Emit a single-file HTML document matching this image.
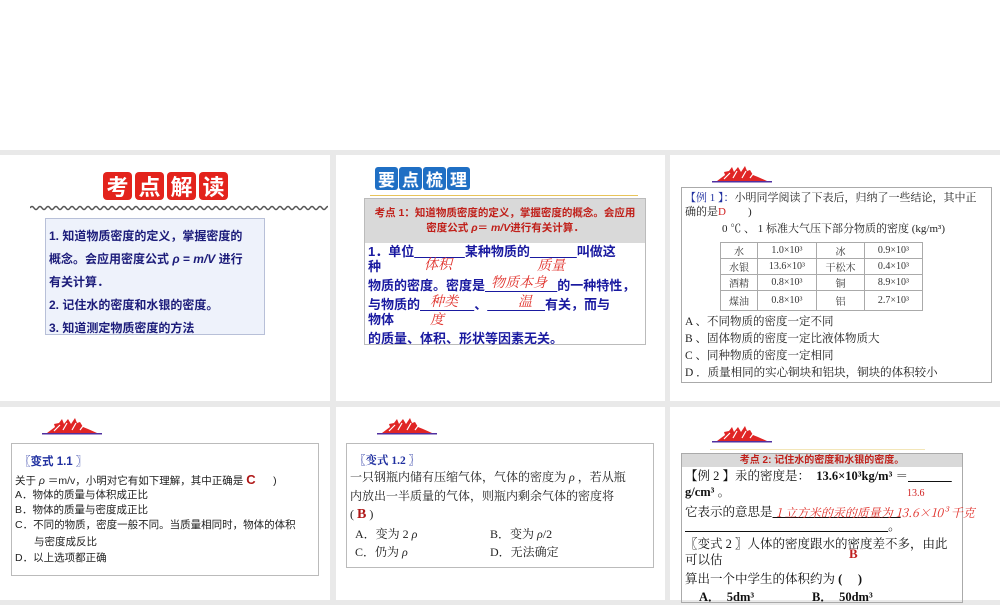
<!DOCTYPE html>
<html><head><meta charset="utf-8"><style>
*{margin:0;padding:0;box-sizing:border-box}
body{width:1000px;height:600px;position:relative;background:#e9e9e9;overflow:hidden;font-family:"Liberation Serif","Noto Serif CJK SC","Noto Sans CJK SC",serif}
.a{position:absolute}
.p{position:absolute;background:#fff}
.s{font-family:"Liberation Sans","Noto Sans CJK SC",sans-serif}
.rb{position:absolute;width:29px;height:28px;background:#e3231c;border-radius:4px;color:#fff;font:bold 22px/28px "Noto Sans CJK SC",sans-serif;text-align:center}
.bb{position:absolute;width:23px;height:23px;background:#1f6fc4;border-radius:3px;color:#fff;font:bold 17px/23px "Noto Sans CJK SC",sans-serif;text-align:center}
.l{position:absolute;white-space:nowrap}
.hw{color:#e0302a;font-family:"Noto Serif CJK SC",serif;font-style:italic;font-size:14px}
table{border-collapse:collapse}
td{border:1px solid #aaa;font-size:10px;text-align:center;color:#333;height:16px}
</style></head><body>
<div class="a" style="left:0;top:0;width:1000px;height:150px;background:#fff"></div>
<div class="p" style="left:0;top:155px;width:330px;height:246px"></div>
<div class="p" style="left:336px;top:155px;width:329px;height:246px"></div>
<div class="p" style="left:670px;top:155px;width:330px;height:246px"></div>
<div class="p" style="left:0;top:407px;width:330px;height:193px"></div>
<div class="p" style="left:336px;top:407px;width:329px;height:193px"></div>
<div class="p" style="left:670px;top:407px;width:330px;height:193px"></div>

<!-- panel1 -->
<div class="rb" style="left:103px;top:172px">考</div>
<div class="rb" style="left:135px;top:172px">点</div>
<div class="rb" style="left:167px;top:172px">解</div>
<div class="rb" style="left:199px;top:172px">读</div>
<svg class="a" style="left:30px;top:205px" width="298" height="6"><path d="M0 3 q2 -3 4 0 t4 0 t4 0 t4 0 t4 0 t4 0 t4 0 t4 0 t4 0 t4 0 t4 0 t4 0 t4 0 t4 0 t4 0 t4 0 t4 0 t4 0 t4 0 t4 0 t4 0 t4 0 t4 0 t4 0 t4 0 t4 0 t4 0 t4 0 t4 0 t4 0 t4 0 t4 0 t4 0 t4 0 t4 0 t4 0 t4 0 t4 0 t4 0 t4 0 t4 0 t4 0 t4 0 t4 0 t4 0 t4 0 t4 0 t4 0 t4 0 t4 0 t4 0 t4 0 t4 0 t4 0 t4 0 t4 0 t4 0 t4 0 t4 0 t4 0 t4 0 t4 0 t4 0 t4 0 t4 0 t4 0 t4 0 t4 0 t4 0 t4 0 t4 0 t4 0 t4 0 t4 0 t4 0 t4 0 t4 0 t4 0" stroke="#555" fill="none" stroke-width="1.5"/></svg>
<div class="a" style="left:45px;top:218px;width:220px;height:117px;background:#eef2fb;border:1px solid #b8c0d8"></div>
<div class="s" style="position:absolute;left:49px;top:225px;color:#1c1c7a;font-size:12px;font-weight:bold;line-height:23px;width:215px">
1. 知道物质密度的定义，掌握密度的<br>概念。会应用密度公式 <i>ρ</i> = <i>m/V</i> 进行<br>有关计算．<br>2. 记住水的密度和水银的密度。<br>3. 知道测定物质密度的方法</div>

<!-- panel2 -->
<div class="bb" style="left:375px;top:167px">要</div>
<div class="bb" style="left:399px;top:167px">点</div>
<div class="bb" style="left:423px;top:167px">梳</div>
<div class="bb" style="left:447px;top:167px">理</div>
<div class="a" style="left:370px;top:195px;width:268px;height:1px;background:#e8c45a"></div>
<div class="a" style="left:364px;top:198px;width:282px;height:147px;border:1px solid #bbb"></div>
<div class="a s" style="left:365px;top:199px;width:280px;height:44px;background:#d9d9d9;color:#c0201a;font-size:10.5px;font-weight:bold;text-align:center;line-height:15px;padding-top:7px">考点 1：知道物质密度的定义，掌握密度的概念。会应用<br>密度公式 <i>ρ</i>＝ <i>m/V</i>进行有关计算．</div>
<div class="s" style="position:absolute;left:368px;top:244px;color:#1a1aa0;font-size:13px;font-weight:bold;line-height:16px">
<div class="l" style="top:0">1．单位<u>&nbsp;&nbsp;&nbsp;&nbsp;&nbsp;&nbsp;&nbsp;&nbsp;&nbsp;&nbsp;&nbsp;&nbsp;&nbsp;&nbsp;</u>某种物质的<u>&nbsp;&nbsp;&nbsp;&nbsp;&nbsp;&nbsp;&nbsp;&nbsp;&nbsp;&nbsp;&nbsp;&nbsp;&nbsp;</u>叫做这</div>
<div class="l" style="top:15px">种</div>
<div class="l" style="top:34px">物质的密度。密度是<u>&nbsp;&nbsp;&nbsp;&nbsp;&nbsp;&nbsp;&nbsp;&nbsp;&nbsp;&nbsp;&nbsp;&nbsp;&nbsp;&nbsp;&nbsp;&nbsp;&nbsp;&nbsp;&nbsp;&nbsp;</u>的一种特性，</div>
<div class="l" style="top:53px">与物质的<u>&nbsp;&nbsp;&nbsp;&nbsp;&nbsp;&nbsp;&nbsp;&nbsp;&nbsp;&nbsp;&nbsp;&nbsp;&nbsp;&nbsp;&nbsp;</u>、<u>&nbsp;&nbsp;&nbsp;&nbsp;&nbsp;&nbsp;&nbsp;&nbsp;&nbsp;&nbsp;&nbsp;&nbsp;&nbsp;&nbsp;&nbsp;&nbsp;</u>有关，而与</div>
<div class="l" style="top:68px">物体</div>
<div class="l" style="top:87px">的质量、体积、形状等因素无关。</div>
</div>
<div class="l hw" style="left:424px;top:254px">体积</div>
<div class="l hw" style="left:537px;top:255px">质量</div>
<div class="l hw" style="left:491px;top:272px">物质本身</div>
<div class="l hw" style="left:430px;top:291px">种类</div>
<div class="l hw" style="left:518px;top:291px">温</div>
<div class="l hw" style="left:430px;top:309px">度</div>

<!-- logos -->
<svg width="0" height="0" style="position:absolute"><defs><g id="lg"><path d="M5 15 L13 9 L12 6 L17 5 L20 1 L22 6 L26 1 L29 6 L33 0 L35 5 L38 4 L41 9 L46 11 L55 15 Z" fill="#e02525"/><path d="M12 13 L18 7 M21 12 L25 5 M30 12 L34 5 M38 12 L41 8" stroke="#fff" stroke-width="1.2"/><rect x="0" y="15" width="60" height="1.5" fill="#5030a0"/></g></defs></svg>
<svg class="a" style="left:712px;top:166px" width="60" height="17"><use href="#lg"/></svg>
<svg class="a" style="left:42px;top:418px" width="60" height="17"><use href="#lg"/></svg>
<svg class="a" style="left:377px;top:418px" width="60" height="17"><use href="#lg"/></svg>
<svg class="a" style="left:712px;top:426px" width="60" height="17"><use href="#lg"/></svg>

<!-- panel3 -->
<div class="a" style="left:681px;top:187px;width:311px;height:196px;border:1px solid #aaa"></div>
<div style="position:absolute;left:685px;top:191px;font-size:11px;line-height:14px;color:#222">
<div class="l" style="top:0"><span style="color:#2030a0">【例 1 】：</span>小明同学阅读了下表后，归纳了一些结论，其中正</div>
<div class="l" style="top:14px">确的是<span style="color:#d02020">D</span>&nbsp;&nbsp;&nbsp;&nbsp;&nbsp;&nbsp;&nbsp;&nbsp;)</div>
<div class="l" style="top:31px;left:37px">0 ℃ 、 1 标准大气压下部分物质的密度 (kg/m³)</div>
<div class="l" style="top:124px;font-size:11.5px">A 、不同物质的密度一定不同</div>
<div class="l" style="top:141px;font-size:11.5px">B 、固体物质的密度一定比液体物质大</div>
<div class="l" style="top:158px;font-size:11.5px">C 、同种物质的密度一定相同</div>
<div class="l" style="top:175px;font-size:11.5px">D ．质量相同的实心铜块和铝块，铜块的体积较小</div>
</div>
<table class="a" style="left:720px;top:242px;width:203px">
<tr><td style="width:37px">水</td><td style="width:59px">1.0×10³</td><td style="width:48px">冰</td><td>0.9×10³</td></tr>
<tr><td>水银</td><td>13.6×10³</td><td>干松木</td><td>0.4×10³</td></tr>
<tr><td>酒精</td><td>0.8×10³</td><td>铜</td><td>8.9×10³</td></tr>
<tr><td style="height:20px">煤油</td><td>0.8×10³</td><td>铝</td><td>2.7×10³</td></tr>
</table>

<!-- row2 panel1 -->
<div class="a" style="left:11px;top:443px;width:308px;height:133px;border:1px solid #bbb"></div>
<div class="s" style="position:absolute;left:15px;top:455px;font-size:10.5px;line-height:15px;color:#222">
<div class="l" style="top:0;left:4px;color:#2030a0;font-weight:bold;font-size:11.5px">〖变式 1.1 〗</div>
<div class="l" style="top:17px">关于 <i>ρ</i> ＝m/v，小明对它有如下理解，其中正确是 <b style="color:#b01818;font-size:13px">C</b>&nbsp;&nbsp;&nbsp;&nbsp;&nbsp;&nbsp;)</div>
<div class="l" style="top:33px">A．物体的质量与体积成正比</div>
<div class="l" style="top:48px">B．物体的质量与密度成正比</div>
<div class="l" style="top:63px">C．不同的物质，密度一般不同。当质量相同时，物体的体积</div>
<div class="l" style="top:80px;left:19px">与密度成反比</div>
<div class="l" style="top:96px">D．以上选项都正确</div>
</div>

<!-- row2 panel2 -->
<div class="a" style="left:346px;top:443px;width:308px;height:125px;border:1px solid #bbb"></div>
<div style="position:absolute;left:350px;top:452px;font-size:12px;line-height:19px;color:#222">
<div class="l" style="top:0;left:4px;color:#2030a0;font-weight:bold;font-size:11.5px">〖变式 1.2 〗</div>
<div class="l" style="top:16px">一只钢瓶内储有压缩气体，气体的密度为 <i>ρ</i> ，若从瓶</div>
<div class="l" style="top:35px">内放出一半质量的气体，则瓶内剩余气体的密度将</div>
<div class="l" style="top:53px">( <b style="color:#b01818;font-size:14px">B</b> )</div>
<div class="l" style="top:73px;left:5px">A．变为 2 <i>ρ</i></div>
<div class="l" style="top:73px;left:140px">B．变为 <i>ρ</i>/2</div>
<div class="l" style="top:91px;left:5px">C．仍为 <i>ρ</i></div>
<div class="l" style="top:91px;left:140px">D．无法确定</div>
</div>

<!-- row2 panel3 -->
<div class="a" style="left:710px;top:449px;width:215px;height:1px;background:#f3e6b8"></div>
<div class="a" style="left:681px;top:453px;width:282px;height:150px;border:1px solid #aaa"></div>
<div class="a s" style="left:682px;top:454px;width:280px;height:13px;background:#d9d9d9;color:#c0201a;font-size:10px;font-weight:bold;text-align:center;line-height:13px">考点 2: 记住水的密度和水银的密度。</div>
<div style="position:absolute;left:685px;top:468px;font-size:12.5px;line-height:16px;color:#111">
<div class="l" style="top:0">【例 2 】汞的密度是：&nbsp;&nbsp;<b>13.6×10³kg/m³</b> ＝<u>&nbsp;&nbsp;&nbsp;&nbsp;&nbsp;&nbsp;&nbsp;&nbsp;&nbsp;&nbsp;&nbsp;&nbsp;&nbsp;&nbsp;</u></div>
<div class="l" style="top:16px"><b>g/cm³</b> 。</div>
<div class="l" style="top:36px">它表示的意思是<u>&nbsp;&nbsp;&nbsp;&nbsp;&nbsp;&nbsp;&nbsp;&nbsp;&nbsp;&nbsp;&nbsp;&nbsp;&nbsp;&nbsp;&nbsp;&nbsp;&nbsp;&nbsp;&nbsp;&nbsp;&nbsp;&nbsp;&nbsp;&nbsp;&nbsp;&nbsp;&nbsp;&nbsp;&nbsp;&nbsp;&nbsp;&nbsp;&nbsp;&nbsp;&nbsp;&nbsp;&nbsp;&nbsp;&nbsp;&nbsp;&nbsp;</u></div>
<div class="l" style="top:50px"><u>&nbsp;&nbsp;&nbsp;&nbsp;&nbsp;&nbsp;&nbsp;&nbsp;&nbsp;&nbsp;&nbsp;&nbsp;&nbsp;&nbsp;&nbsp;&nbsp;&nbsp;&nbsp;&nbsp;&nbsp;&nbsp;&nbsp;&nbsp;&nbsp;&nbsp;&nbsp;&nbsp;&nbsp;&nbsp;&nbsp;&nbsp;&nbsp;&nbsp;&nbsp;&nbsp;&nbsp;&nbsp;&nbsp;&nbsp;&nbsp;&nbsp;&nbsp;&nbsp;&nbsp;&nbsp;&nbsp;&nbsp;&nbsp;&nbsp;&nbsp;&nbsp;&nbsp;&nbsp;&nbsp;&nbsp;&nbsp;&nbsp;&nbsp;&nbsp;&nbsp;&nbsp;&nbsp;&nbsp;&nbsp;&nbsp;</u>。</div>
<div class="l" style="top:68px">〖变式 2 〗人体的密度跟水的密度差不多，由此</div>
<div class="l" style="top:84px">可以估</div>
<div class="l" style="top:103px">算出一个中学生的体积约为 <b>(&nbsp;&nbsp;&nbsp;&nbsp;&nbsp;)</b></div>
<div class="l" style="top:121px;left:14px"><b>A．&nbsp;&nbsp;5dm³</b></div>
<div class="l" style="top:121px;left:127px"><b>B．&nbsp;&nbsp;50dm³</b></div>
</div>
<div class="l" style="left:907px;top:488px;color:#d02020;font-size:10px">13.6</div>
<div class="l hw" style="left:776px;top:504px;font-size:12px">1 立方米的汞的质量为 13.6×10³ 千克</div>
<div class="l" style="left:849px;top:546px;color:#c02020;font-size:13px;font-weight:bold">B</div>
</body></html>
